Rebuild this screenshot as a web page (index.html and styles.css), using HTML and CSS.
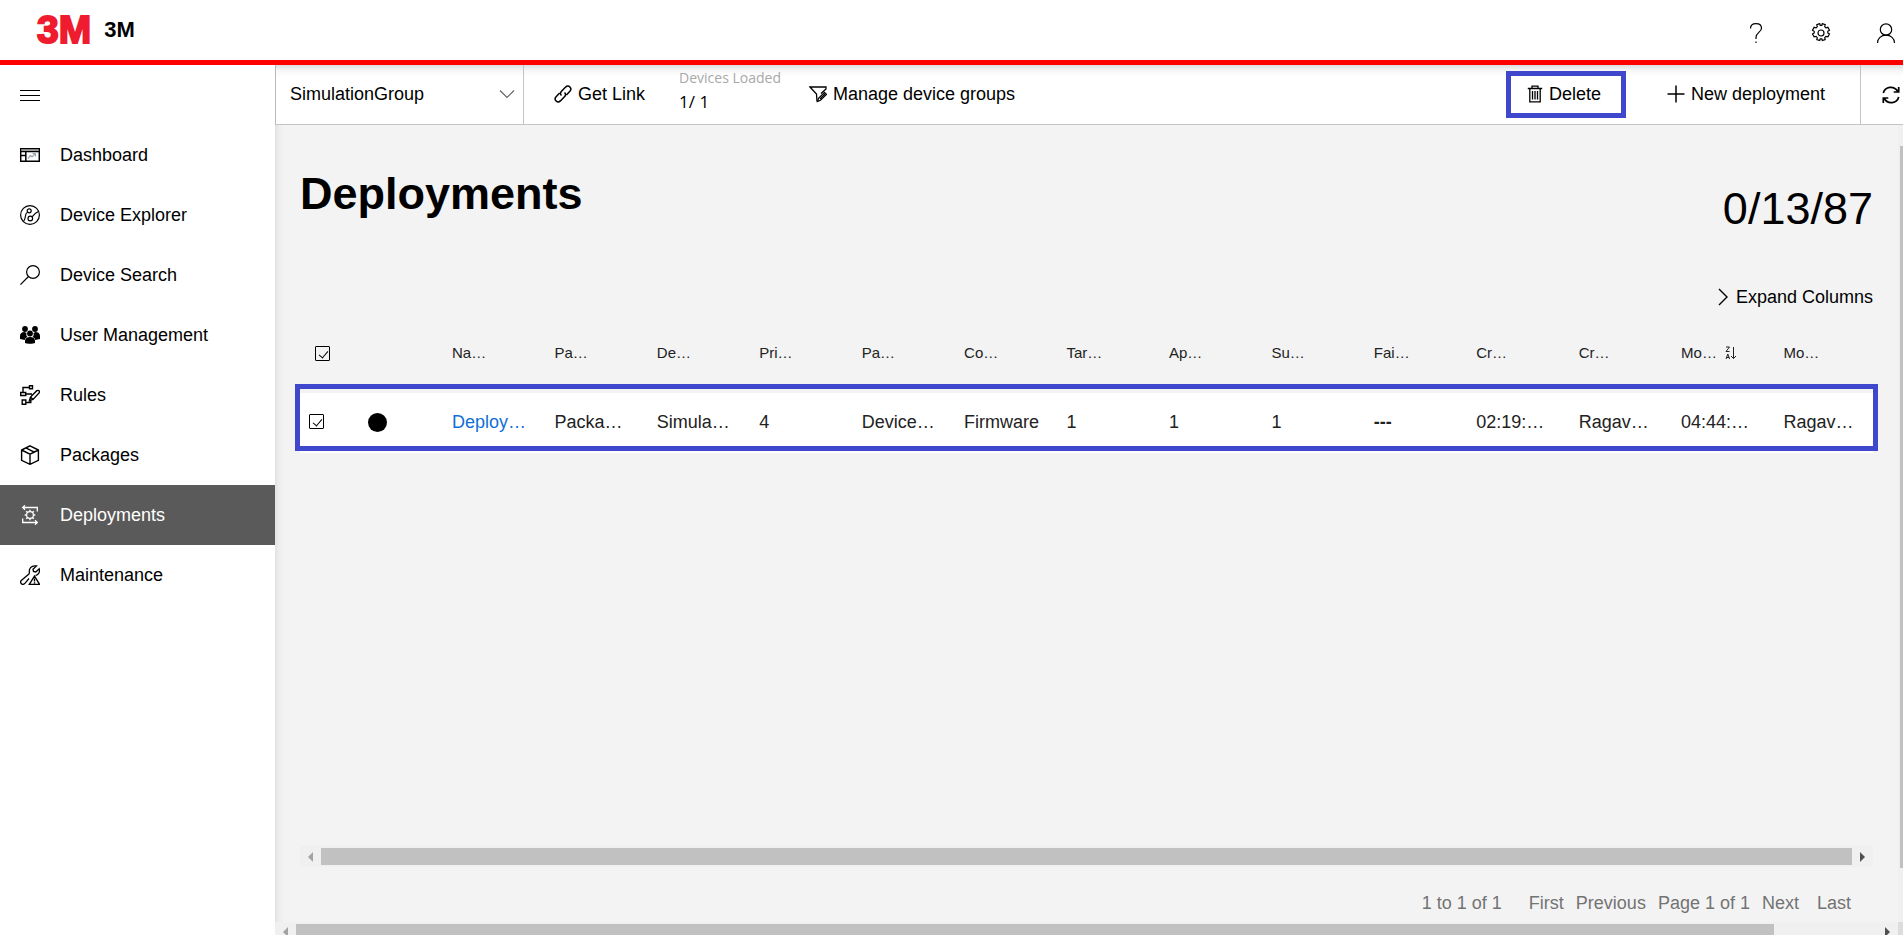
FILE: index.html
```html
<!DOCTYPE html>
<html lang="en">
<head>
<meta charset="utf-8">
<title>3M - Deployments</title>
<link rel="stylesheet" href="styles.css">
</head>
<body>
<header class="topbar">
  <span class="logo">3M</span>
  <span class="brand">3M</span>
  <div class="topbar-actions">
    <button aria-label="Help"><svg width="20" height="20" viewBox="0 0 20 20"><path d="M4.500 5.500C4.500 2.500 6.500 .6 10 .6S15.500 2.700 15.500 5.200C15.500 9 10 9.500 10 14.500V16M10 18.500V20"/></svg></button>
    <button aria-label="Settings"><svg width="20" height="20" viewBox="0 0 20 20"><circle cx="10" cy="10" r="3"/><path d="M8.700 .6l.5 1.800h1.600l.5-1.800 2.900 1-.5 2 1.200 1.200 2-.5 1.600 3-1.700 1v1.600l1.700 1-1.600 3-2-.5-1.200 1.200.5 2-2.900 1-.5-1.700H9.200l-.5 1.700-2.900-1 .5-2-1.200-1.200-2 .5-1.600-3 1.700-1V8.300l-1.700-1 1.600-3 2 .5 1.200-1.200-.5-2z"/></svg></button>
    <button aria-label="Account"><svg width="20" height="20" viewBox="0 0 20 20"><circle cx="10" cy="6.500" r="5.700"/><path d="M1.500 20c0-4.600 3.700-7.800 8.500-7.800s8.500 3.200 8.500 7.800"/></svg></button>
  </div>
</header>
<div class="shell">
  <nav class="sidebar">
    <button class="nav-item" aria-label="Toggle menu"><svg width="20" height="20" viewBox="0 0 20 20" class="crisp"><path d="M0 5.500h20M0 10.500h20M0 15.500h20"/></svg></button>
    <a class="nav-item" href="#"><svg width="20" height="20" viewBox="0 0 20 20"><path d="M.7 3.700h18.600v12.600H.7zM.7 6.500h18.600M5.800 6.500v9.800M.7 10.500h5" stroke-width="1.500"/><path d="M1 5h18" stroke="#888"/><path d="M8 13.500l2.500-3 1.500 1.500 3.500-3.500M12.500 8.500h3v3" stroke="#9aa6b2"/></svg>Dashboard</a>
    <a class="nav-item" href="#"><svg width="20" height="20" viewBox="0 0 20 20"><circle cx="10" cy="10" r="9.400"/><circle cx="9.200" cy="5.800" r="2"/><circle cx="10.300" cy="13.500" r="2.300"/><path d="M7.500 7.200C4 8.500 7 12 3.500 16.500M12 12c2-2.500 3.500-4.500 6.500-5.500"/></svg>Device Explorer</a>
    <a class="nav-item" href="#"><svg width="20" height="20" viewBox="0 0 20 20"><circle cx="13" cy="7" r="6.400"/><path d="M8.500 11.500L.4 19.600"/></svg>Device Search</a>
    <a class="nav-item" href="#"><svg width="20" height="20" viewBox="0 0 20 20" class="solid"><circle cx="5" cy="4" r="2.900"/><circle cx="15" cy="4" r="2.900"/><path d="M0 14V11c0-2.500 1.800-4 4.500-4l2 1c-.5 2.500 0 3 1 4-1.700.6-2.500 1.500-2.700 3zM20 14V11c0-2.500-1.800-4-4.500-4l-2 1c.5 2.500 0 3-1 4 1.700.6 2.500 1.500 2.700 3z"/><circle cx="10" cy="8.500" r="2.900"/><path d="M5 18v-2c0-2.700 2-4 5-4s5 1.300 5 4v2c-1.500 1-8.500 1-10 0z"/></svg>User Management</a>
    <a class="nav-item" href="#"><svg width="20" height="20" viewBox="0 0 20 20"><path d="M9.500 .7h3v3h-3zM.7 7.500h5v3h-5zM2.200 15h3.600v4.300H2.200zM3 7.500v-5h6.500M5.700 9h6.300M5.800 17.500h5V15M9.500 15.500l1-3.500L16.800 5.700c2-1 3.200.5 2.300 2.200L13 14.500zM10.500 12l2.500 2.500" stroke-width="1.400"/></svg>Rules</a>
    <a class="nav-item" href="#"><svg width="20" height="20" viewBox="0 0 20 20"><path d="M10 .8l8.400 4.200v10.300L10 19.300l-8.400-4V5zM1.600 5L10 9.200 18.400 5M10 9.200v10M5.800 2.900l8.400 4.200" stroke-width="1.400"/></svg>Packages</a>
    <a class="nav-item active" href="#" aria-current="page"><svg width="20" height="20" viewBox="0 0 20 20"><path d="M17.300 6.500V2.500H3M5 .3L2.700 2.500 5 4.700M2.700 13.500v4H17M15 15.300l2.300 2.200-2.300 2.200" stroke-width="1.300"/><circle cx="10" cy="10" r="3.400"/><path d="M10 4.700v2M10 13.300v2M4.700 10h2M13.300 10h2M6.200 6.200l1.400 1.400M12.400 12.400l1.400 1.400M6.200 13.800l1.400-1.400M12.400 7.600l1.400-1.400" stroke-width="1.400"/></svg>Deployments</a>
    <a class="nav-item" href="#"><svg width="20" height="20" viewBox="0 0 20 20"><path d="M9.500 8.500C8.500 4 11 0 16.500 1L13 4.200l.5 2.300 2.300.5L19.200 3.800C20 7 18.500 9.500 15.500 10.500M9.500 8.500L1.300 15.500C-.5 17.500 1.800 20.500 4.500 18.800L9 13.500" stroke-width="1.300"/><path d="M14.500 11l5 8.400H9.300zM14.500 13.500v3M14.500 17.300v1.200" stroke-width="1.400"/></svg>Maintenance</a>
  </nav>
  <main class="main">
    <div class="toolbar">
      <div class="group-picker">
        <select aria-label="Device group"><option>SimulationGroup</option></select>
        <svg width="16" height="16" viewBox="0 0 16 16"><path d="M1 4.500l7 7 7-7"/></svg>
      </div>
      <button class="tool link-tool"><svg width="18" height="18" viewBox="0 0 18 18"><path d="M7.500 10.500C6 9 6.300 7.600 7.300 6.600l4.300-4.500c3-2.800 7 1.200 4.300 4.200l-3.500 3.600M10.500 7.500C12 9 11.700 10.400 10.700 11.400l-4.300 4.500c-3 2.800-7-1.200-4.300-4.200l3.500-3.600" stroke-width="1.500"/></svg>Get Link</button>
      <div class="loaded"><span class="loaded-label">Devices Loaded</span><span class="loaded-value">1/ 1</span></div>
      <button class="tool"><svg width="18" height="18" viewBox="0 0 18 18"><path d="M8 16.500L7.500 9 1 2h16v2L12 8.500" stroke-width="1.300"/><path d="M8.500 16.500l1-3.200 6-6 2 2-6 6zM11 14l5-5"/></svg>Manage device groups</button>
      <button class="tool delete-tool"><svg width="16" height="18" viewBox="0 0 16 18"><path d="M.8 3.500h14.400M5 3.500V1.200h6v2.300M2.800 3.500v13.300h10.400V3.500M5.500 6v8.500M8 6v8.500M10.500 6v8.500" stroke-width="1.300"/></svg>Delete</button>
      <button class="tool new-tool"><svg width="18" height="18" viewBox="0 0 18 18"><path d="M9 .5v17M.5 9h17" stroke-width="1.500"/></svg>New deployment</button>
      <button class="refresh" aria-label="Refresh"><svg width="18" height="18" viewBox="0 0 18 18"><path d="M1.300 7C3 .5 12 -.8 15.800 5.500M16.700 1v5h-5M16.700 11C15 17.500 6 18.800 2.200 12.500M1.300 17v-5h5" stroke-width="1.700"/></svg></button>
    </div>
    <div class="viewport">
      <section class="page">
        <div class="page-head">
          <h1>Deployments</h1>
          <div class="count">0/13/87</div>
        </div>
        <button class="expand"><svg width="10" height="18" viewBox="0 0 10 18"><path d="M1 1l8 8-8 8" stroke-width="1.400"/></svg>Expand Columns</button>
        <div class="grid">
          <table>
            <colgroup><col class="col-check"><col class="col-status"><col span="14"></colgroup>
            <thead><tr>
              <th class="check-all"><input type="checkbox" checked aria-label="Select all"></th><th></th>
              <th>Na…</th><th>Pa…</th><th>De…</th><th>Pri…</th><th>Pa…</th><th>Co…</th><th>Tar…</th><th>Ap…</th><th>Su…</th><th>Fai…</th><th>Cr…</th><th>Cr…</th>
              <th>Mo… <svg class="sort" width="12" height="14" viewBox="0 0 12 14"><path d="M1 1h3.500L1 5.500h3.500M1 13l1.800-5 1.800 5M1.600 11.500h2.400M8.500 1v11.500M6 10l2.500 2.500L11 10"/></svg></th><th>Mo…</th>
            </tr></thead>
            <tbody><tr>
              <td class="check-row"><input type="checkbox" checked aria-label="Select deployment"></td><td class="status"><span class="dot"></span></td>
              <td><a href="#">Deploy…</a></td><td>Packa…</td><td>Simula…</td><td>4</td><td>Device…</td><td>Firmware</td><td>1</td><td>1</td><td>1</td><td><b>---</b></td><td>02:19:…</td><td>Ragav…</td><td>04:44:…</td><td>Ragav…</td>
            </tr></tbody>
          </table>
          <div class="callout"></div>
        </div>
        <div class="hscroll"><span class="arrow left"></span><span class="thumb"></span><span class="arrow right"></span></div>
        <div class="pager">
          <span class="range">1 to 1 of 1</span>
          <button>First</button><button>Previous</button><span>Page 1 of 1</span><button>Next</button><button>Last</button>
        </div>
      </section>
      <div class="vscroll"><span class="thumb"></span></div>
      <div class="hscroll outer"><span class="arrow left"></span><span class="track"><span class="thumb"></span></span><span class="arrow right"></span></div>
      <div class="corner"></div>
    </div>
  </main>
</div>
</body>
</html>
```
FILE: styles.css
```css
* { box-sizing: border-box; }
body {
  margin: 0;
  height: 100vh;
  display: flex;
  flex-direction: column;
  overflow: hidden;
  background: #fff;
  color: #000;
  font: 18px/24px "Liberation Sans", Arial, sans-serif;
}
button, select {
  margin: 0;
  padding: 0;
  border: 0;
  background: none;
  color: inherit;
  font: inherit;
  appearance: none;
}
svg { fill: none; stroke: currentColor; stroke-width: 1.2; flex: none; }
.solid { fill: currentColor; stroke: none; }
.crisp { shape-rendering: crispEdges; }

.topbar {
  display: flex;
  align-items: center;
  height: 65px;
  flex: none;
  padding: 0 7px 0 37px;
  border-bottom: 5px solid #f00;
}
.logo {
  color: #ee1c2e;
  font-size: 39px;
  font-weight: 700;
  line-height: 62px;
  -webkit-text-stroke: 2px #ee1c2e;
}
.brand { margin-left: 13px; font-size: 22px; font-weight: 700; }
.topbar-actions { display: flex; gap: 45px; margin-left: auto; padding-top: 6px; }
.topbar-actions button { display: flex; }

.shell { flex: 1; display: flex; min-height: 0; }
.sidebar { width: 275px; flex: none; }
.nav-item {
  display: flex;
  align-items: center;
  gap: 20px;
  width: 100%;
  height: 60px;
  padding: 0 20px;
  color: #000;
  text-decoration: none;
}
.nav-item.active { background: #5a5a5a; color: #fff; }

.main {
  flex: 1;
  min-width: 0;
  display: flex;
  flex-direction: column;
}
.toolbar {
  display: flex;
  align-items: center;
  height: 60px;
  flex: none;
  border-left: 1px solid #b8b8b8;
  border-bottom: 1px solid #c4c4c4;
  background: linear-gradient(#dedede, #f8f8f8 6px, #fff 12px);
}
.group-picker {
  position: relative;
  width: 248px;
  height: 100%;
  border-right: 1px solid #c4c4c4;
}
.group-picker select { width: 100%; height: 100%; padding: 0 40px 2px 14px; }
.group-picker svg {
  position: absolute;
  right: 8px;
  top: 21px;
  color: #666;
  pointer-events: none;
}
.tool { display: flex; align-items: center; gap: 6px; padding-bottom: 2px; white-space: nowrap; }
.link-tool { margin-left: 30px; }
.loaded {
  display: flex;
  flex-direction: column;
  margin: 0 28px 0 34px;
  padding-bottom: 10px;
  font-family: "Open Sans", "Noto Sans", sans-serif;
}
.loaded-label { font-size: 14px; color: #a8a8a8; }
.loaded-value { font-size: 17px; }
.delete-tool {
  height: 47px;
  margin-left: auto;
  padding: 0 20px 2px 16px;
  border: 5px solid #3f48cc;
}
.new-tool { margin: 0 35px 0 41px; }
.refresh {
  display: flex;
  align-items: center;
  height: 100%;
  padding: 0 3px 0 21px;
  border-left: 1px solid #c4c4c4;
}

.viewport {
  flex: 1;
  min-height: 0;
  display: grid;
  grid-template: minmax(0, 1fr) 13px / minmax(0, 1fr) 5px;
  background: linear-gradient(90deg, #e2e2e2, #ededed 4px, #f3f3f3 9px);
}
.page {
  display: flex;
  flex-direction: column;
  padding: 41px 25px 0 25px;
}
.page-head { display: flex; justify-content: space-between; }
h1 { margin: 0; font-size: 45px; line-height: 56px; }
.count { padding-top: 15px; font-size: 45px; line-height: 56px; }
.expand { display: flex; align-items: center; gap: 8px; align-self: flex-end; margin-top: 48px; }

.grid { position: relative; flex: 1; margin-top: 14px; }
table { width: 100%; table-layout: fixed; border-collapse: collapse; }
.col-check { width: 56px; }
.col-status { width: 83px; }
th, td {
  padding: 0 0 0 13px;
  text-align: left;
  font-weight: 400;
  white-space: nowrap;
  color: #222;
}
th { height: 70px; padding-bottom: 10px; font-size: 15px; }
td { height: 60px; padding-bottom: 2px; background: #fff; }
td a { color: #0f6fd6; text-decoration: none; }
.check-all { padding-left: 15px; }
.check-row { padding-left: 9px; padding-bottom: 4px; }
.status { padding-left: 12px; }
.sort { margin-left: 4px; vertical-align: -2px; stroke-width: 1; }
input[type="checkbox"] {
  display: block;
  width: 15px;
  height: 15px;
  margin: 0;
  appearance: none;
  border: 1px solid #000;
  border-radius: 1px;
  position: relative;
}
input[type="checkbox"]:checked::after {
  content: "";
  position: absolute;
  left: 5px;
  top: 2px;
  width: 4px;
  height: 8px;
  border: solid #000;
  border-width: 0 1px 1px 0;
  transform: rotate(40deg);
}
.dot { display: block; width: 19px; height: 19px; border-radius: 50%; background: #000; }
.callout {
  position: absolute;
  top: 61px;
  left: -5px;
  right: -5px;
  height: 67px;
  border: 5px solid #3f48cc;
  pointer-events: none;
}

.hscroll { display: flex; align-items: center; height: 21px; background: #f0f0f0; }
.hscroll .thumb { flex: 1; height: 17px; background: #c1c1c1; }
.arrow { width: 21px; display: flex; justify-content: center; }
.arrow::before { content: ""; border: 5px solid transparent; }
.arrow.left::before { border-left-width: 0; border-right-color: #a3a3a3; }
.arrow.right::before { border-right-width: 0; border-left-color: #505050; }
.hscroll.outer { align-items: flex-start; height: 13px; overflow: hidden; }
.outer .arrow { padding-top: 5px; }
.outer .track { flex: 1; display: flex; padding-top: 2px; }
.outer .track .thumb { flex: 0 0 93.5%; }

.pager {
  display: flex;
  justify-content: flex-end;
  align-items: center;
  gap: 12px;
  padding: 24px 22px 7px 0;
  color: #737373;
}
.range { margin-right: 15px; }
.pager button:last-child { margin-left: 6px; }

.vscroll { display: flex; justify-content: flex-end; padding: 21px 0 0; background: #f0f0f0; }
.vscroll .thumb { width: 3px; height: 93%; background: #c1c1c1; }
.corner { background: #dcdcdc; }
```
